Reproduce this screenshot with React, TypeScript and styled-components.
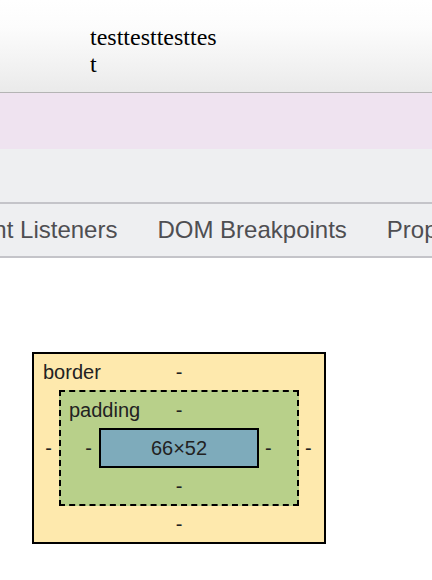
import React from "react";
import styled, { createGlobalStyle } from "styled-components";

const Global = createGlobalStyle`
  html, body { margin: 0; padding: 0; background: #ffffff; }
  body { width: 432px; height: 580px; overflow: hidden; }
`;

const Page = styled.div`
  width: 432px;
  display: flex;
  flex-direction: column;
`;

const Header = styled.div`
  height: 93px;
  box-sizing: border-box;
  padding: 24px 0 0 90px;
  background: linear-gradient(to bottom, #ffffff 0%, #fcfcfc 30%, #f2f2f2 70%, #eaeaea 100%);
  border-bottom: 1px solid #b4b4b4;
`;

const TestText = styled.div`
  width: 128px;
  font-family: "Liberation Serif", "Times New Roman", serif;
  font-size: 24px;
  line-height: 27px;
  color: #000;
  word-break: break-all;
`;

const Band = styled.div<{ $h: number; $bg: string }>`
  height: ${(p) => p.$h}px;
  background: ${(p) => p.$bg};
`;

const TabBar = styled.div`
  height: 56px;
  box-sizing: border-box;
  border-top: 2px solid #c4c4c9;
  border-bottom: 2px solid #c4c4c9;
  background: #eeeff1;
  overflow: hidden;
  display: flex;
  align-items: center;
`;

const TabList = styled.div`
  display: flex;
  margin-left: -68px;
  white-space: nowrap;
`;

const Tab = styled.div`
  padding: 0 20px;
  font-family: "Liberation Sans", Arial, sans-serif;
  font-size: 24px;
  color: #4e4e52;
`;

const Section = styled.div`
  padding: 94px 0 0 32px;
`;

const Label = styled.span<{ $indent?: number }>`
  font-family: "Liberation Sans", Arial, sans-serif;
  font-size: 20px;
  line-height: 24px;
  color: #222;
  padding-left: ${(p) => p.$indent ?? 0}px;
`;

const OuterBox = styled.div`
  width: 294px;
  height: 192px;
  box-sizing: border-box;
  border: 2px solid #000;
  background: #fee9ad;
  display: grid;
  grid-template-columns: 25px 1fr 25px;
  grid-template-rows: 36px 1fr 36px;
`;

const PaddingBox = styled.div`
  box-sizing: border-box;
  border: 2px dashed #000;
  background: #b8d08a;
  display: grid;
  grid-template-columns: 38px 1fr 38px;
  grid-template-rows: 36px 1fr 36px;
`;

const TopRow = styled.div`
  grid-column: 1 / -1;
  display: grid;
  grid-template-columns: 1fr auto 1fr;
  align-items: center;
`;

const Cell = styled.div<{ $span?: boolean; $side?: "left" | "right" }>`
  display: flex;
  align-items: center;
  justify-content: ${(p) =>
    p.$side === "left" ? "flex-end" : p.$side === "right" ? "flex-start" : "center"};
  padding: ${(p) =>
    p.$side === "left" ? "0 7px 0 0" : p.$side === "right" ? "0 0 0 6px" : "0"};
  ${(p) => (p.$span ? "grid-column: 1 / -1;" : "")}
`;

const ContentBox = styled.div`
  box-sizing: border-box;
  border: 2px solid #000;
  background: #7eabbb;
  display: flex;
  align-items: center;
  justify-content: center;
`;

export default function App() {
  return (
    <Page>
      <Global />
      <Header>
        <TestText>testtesttesttest</TestText>
      </Header>
      <Band $h={56} $bg="#efe3f0" />
      <Band $h={53} $bg="#eeeff1" />
      <TabBar>
        <TabList>
          <Tab>Event Listeners</Tab>
          <Tab>DOM Breakpoints</Tab>
          <Tab>Properties</Tab>
        </TabList>
      </TabBar>
      <Section>
        <OuterBox>
          <TopRow>
            <Label $indent={9}>border</Label>
            <Label>-</Label>
            <span />
          </TopRow>
          <Cell $side="left"><Label>-</Label></Cell>
          <PaddingBox>
            <TopRow>
              <Label $indent={8}>padding</Label>
              <Label>-</Label>
              <span />
            </TopRow>
            <Cell $side="left"><Label>-</Label></Cell>
            <ContentBox><Label>66×52</Label></ContentBox>
            <Cell $side="right"><Label>-</Label></Cell>
            <Cell $span><Label>-</Label></Cell>
          </PaddingBox>
          <Cell $side="right"><Label>-</Label></Cell>
          <Cell $span><Label>-</Label></Cell>
        </OuterBox>
      </Section>
    </Page>
  );
}
